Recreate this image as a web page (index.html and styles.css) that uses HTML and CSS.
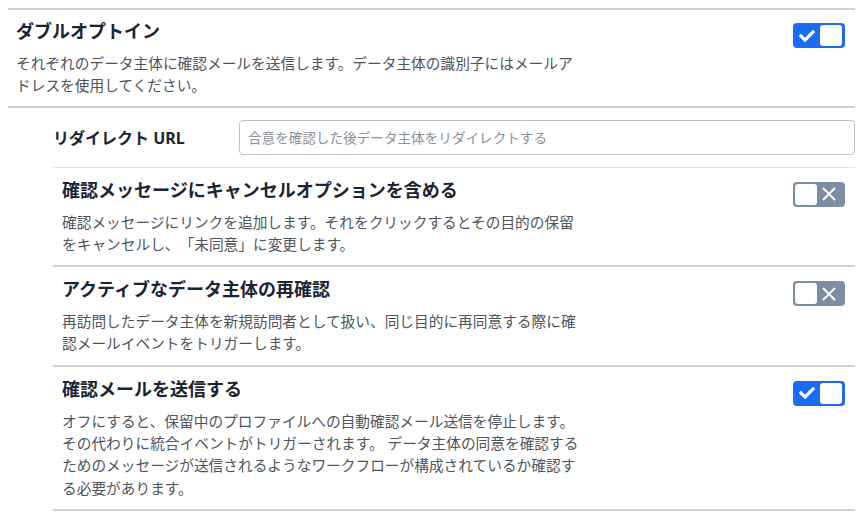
FILE: index.html
```html
<!DOCTYPE html>
<html lang="ja">
<head>
<meta charset="utf-8">
<title>ダブルオプトイン</title>
<link rel="stylesheet" href="styles.css">
</head>
<body>
<div class="panel">
  <section class="opt opt-main">
    <div class="opt-text">
      <h2 class="opt-title">ダブルオプトイン</h2>
      <p class="opt-desc desc-main">それぞれのデータ主体に確認メールを送信します。データ主体の識別子にはメールアドレスを使用してください。</p>
    </div>
    <span class="toggle on">
      <svg class="tg-icon check" width="16" height="16" viewBox="0 0 512 512"><path fill="#fff" d="M173.898 439.404l-166.4-166.4c-9.997-9.997-9.997-26.206 0-36.204l36.203-36.204c9.997-9.998 26.207-9.998 36.204 0L192 312.69 432.095 72.596c9.997-9.997 26.207-9.997 36.204 0l36.203 36.204c9.997 9.997 9.997 26.206 0 36.204l-294.4 294.401c-9.998 9.997-26.207 9.997-36.204-.001z"/></svg>
      <span class="knob"></span>
    </span>
  </section>
  <div class="sub">
    <div class="field">
      <label class="field-label" for="redir">リダイレクト URL</label>
      <input class="field-input" id="redir" type="text" placeholder="合意を確認した後データ主体をリダイレクトする">
    </div>
    <section class="opt opt-sub">
      <div class="opt-text">
        <h3 class="opt-title">確認メッセージにキャンセルオプションを含める</h3>
        <p class="opt-desc desc-sub">確認メッセージにリンクを追加します。それをクリックするとその目的の保留をキャンセルし、「未同意」に変更します。</p>
      </div>
      <span class="toggle off">
        <span class="knob"></span>
        <svg class="tg-icon cross" width="14" height="14" viewBox="0 0 14 14"><path d="M1.5 1.5 L12.5 12.5 M12.5 1.5 L1.5 12.5" fill="none" stroke="#fff" stroke-width="2" stroke-linecap="round"/></svg>
      </span>
    </section>
    <section class="opt opt-sub">
      <div class="opt-text">
        <h3 class="opt-title">アクティブなデータ主体の再確認</h3>
        <p class="opt-desc desc-sub">再訪問したデータ主体を新規訪問者として扱い、同じ目的に再同意する際に確認メールイベントをトリガーします。</p>
      </div>
      <span class="toggle off">
        <span class="knob"></span>
        <svg class="tg-icon cross" width="14" height="14" viewBox="0 0 14 14"><path d="M1.5 1.5 L12.5 12.5 M12.5 1.5 L1.5 12.5" fill="none" stroke="#fff" stroke-width="2" stroke-linecap="round"/></svg>
      </span>
    </section>
    <section class="opt opt-sub">
      <div class="opt-text">
        <h3 class="opt-title">確認メールを送信する</h3>
        <p class="opt-desc desc-sub">オフにすると、保留中のプロファイルへの自動確認メール送信を停止します。その代わりに統合イベントがトリガーされます。 データ主体の同意を確認するためのメッセージが送信されるようなワークフローが構成されているか確認する必要があります。</p>
      </div>
      <span class="toggle on">
        <svg class="tg-icon check" width="16" height="16" viewBox="0 0 512 512"><path fill="#fff" d="M173.898 439.404l-166.4-166.4c-9.997-9.997-9.997-26.206 0-36.204l36.203-36.204c9.997-9.998 26.207-9.998 36.204 0L192 312.69 432.095 72.596c9.997-9.997 26.207-9.997 36.204 0l36.203 36.204c9.997 9.997 9.997 26.206 0 36.204l-294.4 294.401c-9.998 9.997-26.207 9.997-36.204-.001z"/></svg>
        <span class="knob"></span>
      </span>
    </section>
  </div>
</div>
</body>
</html>
```
FILE: styles.css
```css
html, body {
  background: #ffffff;
}
body {
  margin: 8px;
  font-family: "Noto Sans", "Noto Sans CJK JP", sans-serif;
  color: #1d2733;
  text-spacing-trim: space-all;
}
.panel {
  width: 847px;
}
.opt {
  display: flex;
  justify-content: space-between;
  align-items: flex-start;
}
.opt-main {
  border-top: 2px solid #c8d3df;
  border-bottom: 2px solid #c8d3df;
  padding: 9px 10px 9px 8px;
}
.opt-text {
  display: flex;
  flex-direction: column;
}
.opt-title {
  margin: 0;
  font-size: 18px;
  line-height: 24px;
  font-weight: 700;
  color: #1b2431;
}
.opt-desc {
  margin: 9px 0 0;
  font-size: 14.7px;
  line-height: 22.3px;
  color: #4f545b;
  text-spacing-trim: space-all;
}
.desc-main {
  width: 566px;
}
.desc-sub {
  width: 520px;
}
.sub {
  padding-left: 45px;
}
.field {
  display: flex;
  align-items: center;
  padding: 12px 0;
  border-bottom: 1px solid #e0e4e9;
}
.field-label {
  width: 186px;
  flex: none;
  font-size: 16px;
  font-weight: 700;
  color: #1b2431;
}
.field-input {
  flex: 1;
  height: 35px;
  box-sizing: border-box;
  border: 1px solid #b9c5d3;
  border-radius: 4px;
  padding: 0 8px;
  font-family: inherit;
  font-size: 13.6px;
  color: #1d2733;
  background: #fff;
  outline: none;
}
.field-input::placeholder {
  color: #8b9097;
}
.opt-sub {
  padding: 10px 10px 10px 9px;
  border-bottom: 2px solid #c8d3df;
}
.toggle {
  flex: none;
  margin-top: 4px;
  width: 52px;
  height: 25px;
  box-sizing: border-box;
  border-radius: 4px;
  padding: 2px;
  display: flex;
  align-items: center;
}
.toggle.on {
  background: #1a6df2;
}
.toggle.off {
  background: #7c8ea3;
}
.knob {
  width: 22px;
  height: 21px;
  background: #ffffff;
  border-radius: 3px;
  flex: none;
}
.tg-icon {
  flex: none;
}
.toggle.on .check {
  margin: 0 5px 0 4px;
}
.toggle.off .cross {
  margin-left: 5px;
}
```
